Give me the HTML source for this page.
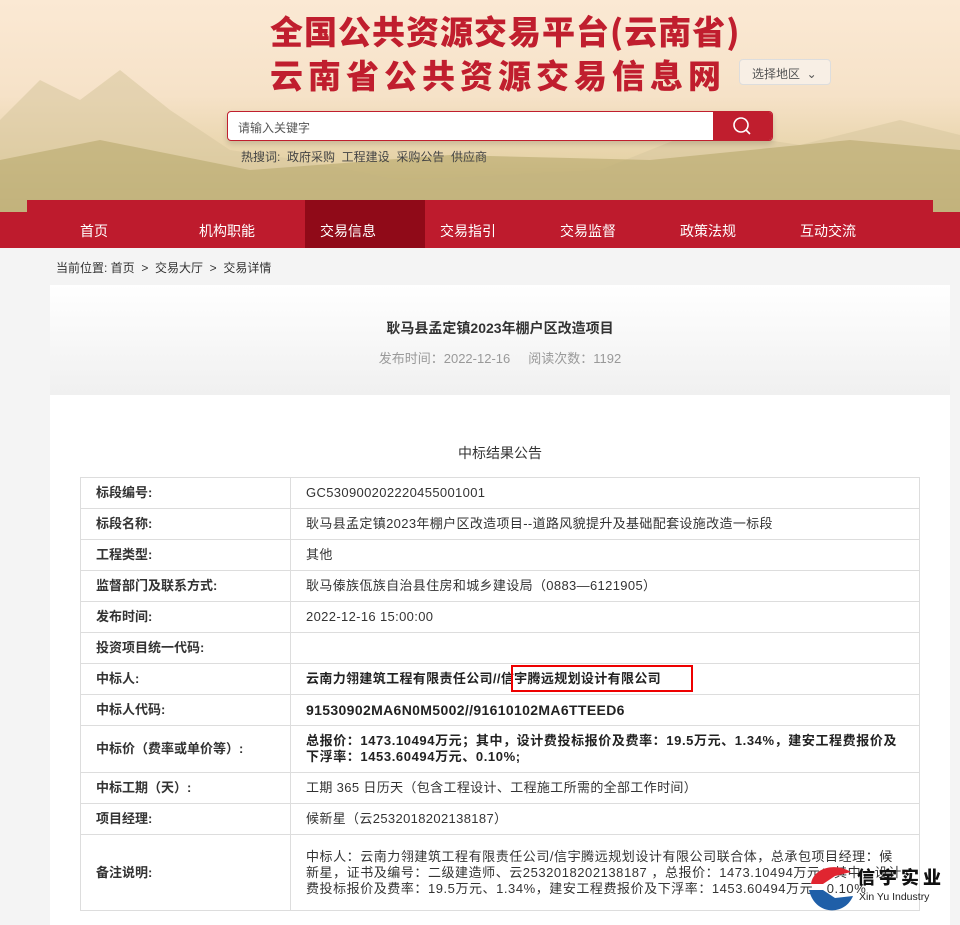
<!DOCTYPE html>
<html><head><meta charset="utf-8"><style>
*{margin:0;padding:0;box-sizing:border-box}
body{width:960px;height:922px;overflow:hidden;background:#f4f4f4;font-family:"Liberation Sans","Noto Sans CJK SC",sans-serif;color:#333;position:relative}
.hdr{position:absolute;left:0;top:0;width:960px;height:212px;background:linear-gradient(180deg,#fbe9d4 0%,#f6e2c8 45%,#e6d3a8 75%,#c9b982 100%)}
.mtn{position:absolute;left:0;top:60px;width:960px;height:152px}
.t1,.t2{position:absolute;left:270px;font-family:"Noto Sans CJK SC",sans-serif;font-weight:900;color:#c01e2e;letter-spacing:1px;white-space:nowrap}
.t1{top:6px;font-size:33px}
.t2{top:50px;font-size:33px;letter-spacing:5px}
.sel{position:absolute;left:739px;top:59px;width:92px;height:26px;border:1px solid #ddd;border-radius:4px;background:#f8efe5;font-size:12px;color:#555;padding:5px 0 0 12px}
.srch{position:absolute;left:227px;top:111px;width:546px;height:30px;border:1px solid #c01e2e;border-radius:4px;background:#fff;overflow:hidden;box-shadow:0 3px 6px rgba(0,0,0,.15)}
.srch span{position:absolute;left:10px;top:7px;font-size:12px;color:#555}
.srch .b{position:absolute;right:0;top:0;width:59px;height:30px;background:#c01e2e}
.hot{position:absolute;left:241px;top:148px;font-size:12px;color:#444}
.nav{position:absolute;left:0;top:212px;width:960px;height:36px;background:#be1b2d}
.navtop{position:absolute;left:27px;top:200px;width:906px;height:12px;background:#be1b2d}
.nav a{position:absolute;top:9px;font-size:14px;color:#fff}
.nav .on{position:absolute;left:305px;top:-12px;width:120px;height:48px;background:#900a18}
.crumb{position:absolute;left:56px;top:259px;font-size:12px;color:#333}
.card{position:absolute;left:50px;top:285px;width:900px;height:640px;background:#fff}
.th{position:absolute;left:0;top:0;width:900px;height:110px;background:linear-gradient(180deg,#fff,#f0f0f0)}
.ttl{position:absolute;left:0;width:900px;text-align:center;top:33px;font-size:14px;font-weight:bold;color:#333}
.meta{position:absolute;left:0;width:900px;text-align:center;top:63px;font-size:13px;color:#999}
.sub{position:absolute;left:0;width:900px;text-align:center;top:158px;font-size:14px;color:#333}
table{position:absolute;left:80px;top:477px;width:840px;border-collapse:collapse;font-size:13px}
td{border:1px solid #ddd;height:31px;padding:0 15px;color:#333;line-height:16px;letter-spacing:.35px}
td.l{width:210px;font-weight:bold;padding-left:15px;letter-spacing:0}
.bd{font-weight:bold;color:#222}
.box{position:absolute;left:511px;top:665px;width:182px;height:27px;border:2px solid #e00}
.logo{position:absolute;left:805px;top:858px;width:150px;height:60px}
</style></head><body>
<div class="hdr">
<svg class="mtn" viewBox="0 0 960 152"><path d="M0 60 L40 20 L80 40 L120 10 L170 50 L230 90 L300 100 L400 120 L600 110 L700 70 L800 85 L900 60 L960 75 L960 152 L0 152Z" fill="#d8c8a0" opacity=".6"/><path d="M0 100 L100 80 L250 110 L450 95 L650 100 L850 80 L960 90 L960 152 L0 152Z" fill="#b8a86c" opacity=".6"/></svg>
<div class="t1">全国公共资源交易平台(云南省)</div>
<div class="t2">云南省公共资源交易信息网</div>
<div class="sel">选择地区 &nbsp;⌄</div>
<div class="srch"><span>请输入关键字</span><div class="b"><svg width="59" height="30"><circle cx="28" cy="13" r="7" stroke="#fff" stroke-width="1.6" fill="none"/><path d="M33 18 L37 22" stroke="#fff" stroke-width="1.6"/></svg></div></div>
<div class="hot">热搜词: &nbsp;政府采购 &nbsp;工程建设 &nbsp;采购公告 &nbsp;供应商</div>
</div>
<div class="navtop"></div>
<div class="nav"><div class="on"></div>
<a style="left:80px">首页</a><a style="left:199px">机构职能</a><a style="left:320px">交易信息</a><a style="left:440px">交易指引</a><a style="left:560px">交易监督</a><a style="left:680px">政策法规</a><a style="left:800px">互动交流</a></div>
<div class="crumb">当前位置: 首页 &nbsp;&gt; &nbsp;交易大厅 &nbsp;&gt; &nbsp;交易详情</div>
<div class="card"><div class="th"></div>
<div class="ttl">耿马县孟定镇2023年棚户区改造项目</div>
<div class="meta">发布时间：2022-12-16 &nbsp;&nbsp;&nbsp; 阅读次数：1192</div>
<div class="sub">中标结果公告</div></div>
<table>
<tr><td class="l">标段编号:</td><td>GC530900202220455001001</td></tr>
<tr><td class="l">标段名称:</td><td>耿马县孟定镇2023年棚户区改造项目--道路风貌提升及基础配套设施改造一标段</td></tr>
<tr><td class="l">工程类型:</td><td>其他</td></tr>
<tr><td class="l">监督部门及联系方式:</td><td>耿马傣族佤族自治县住房和城乡建设局（0883—6121905）</td></tr>
<tr><td class="l">发布时间:</td><td>2022-12-16 15:00:00</td></tr>
<tr><td class="l">投资项目统一代码:</td><td></td></tr>
<tr><td class="l">中标人:</td><td class="bd">云南力翎建筑工程有限责任公司//信宇腾远规划设计有限公司</td></tr>
<tr><td class="l">中标人代码:</td><td class="bd" style="font-size:14px">91530902MA6N0M5002//91610102MA6TTEED6</td></tr>
<tr><td class="l" style="height:47px">中标价（费率或单价等）:</td><td class="bd" style="letter-spacing:.6px">总报价：1473.10494万元；其中，设计费投标报价及费率：19.5万元、1.34%，建安工程费报价及下浮率：1453.60494万元、0.10%;</td></tr>
<tr><td class="l">中标工期（天）:</td><td>工期 365 日历天（包含工程设计、工程施工所需的全部工作时间）</td></tr>
<tr><td class="l">项目经理:</td><td>候新星（云2532018202138187）</td></tr>
<tr><td class="l" style="height:76px">备注说明:</td><td style="letter-spacing:.55px">中标人：云南力翎建筑工程有限责任公司/信宇腾远规划设计有限公司联合体，总承包项目经理：候新星，证书及编号：二级建造师、云2532018202138187 ，总报价：1473.10494万元；其中，设计费投标报价及费率：19.5万元、1.34%，建安工程费报价及下浮率：1453.60494万元、0.10%</td></tr>
</table>
<div class="box"></div>
<svg class="logo" viewBox="0 0 150 60"><path d="M6 26 C8 10 30 4 46 14 L30 18 L18 26 Z" fill="#e02530"/><path d="M4 32 C10 58 40 58 48 38 L30 40 L18 32 Z" fill="#1f5fa8"/><text x="52" y="26" font-family="Noto Sans CJK SC,sans-serif" font-weight="900" font-size="18" fill="#111" letter-spacing="4">信宇实业</text><text x="54" y="42" font-family="Liberation Sans,sans-serif" font-size="10.5" fill="#222">Xin Yu Industry</text></svg>
</body></html>
